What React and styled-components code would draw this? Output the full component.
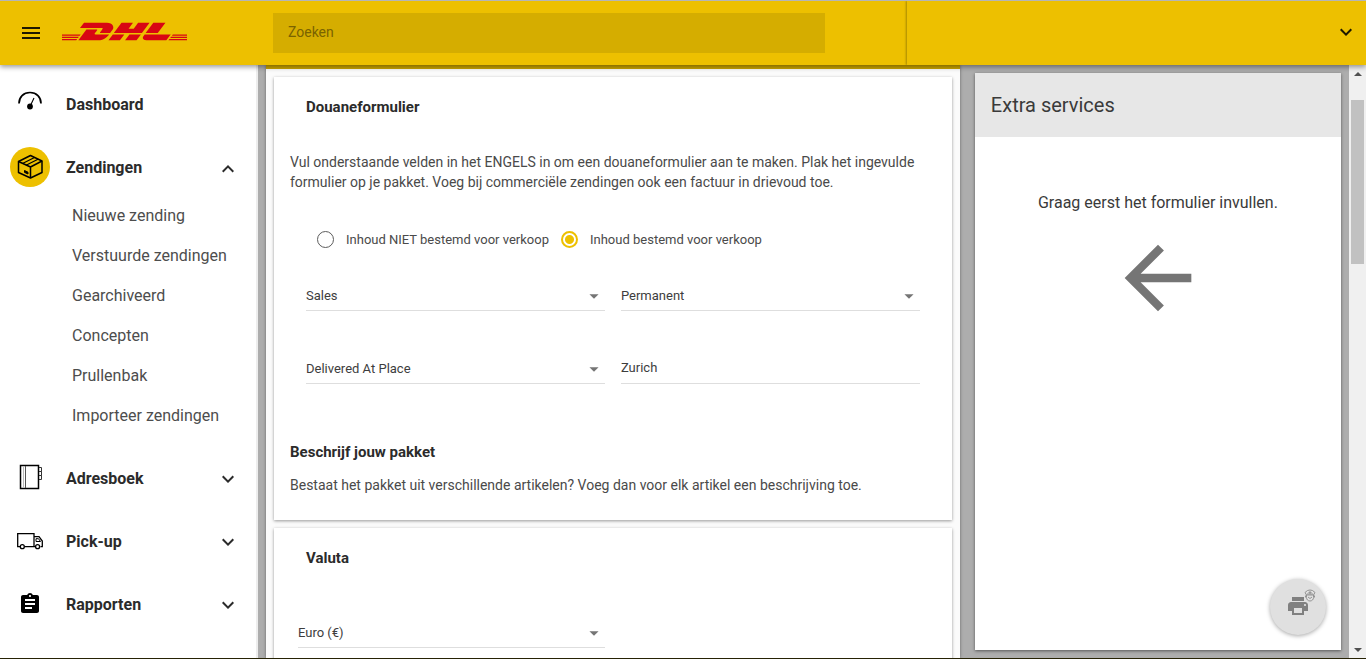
import React from "react";
import styled, { createGlobalStyle, css } from "styled-components";
import {
  MdMenu,
  MdExpandMore,
  MdExpandLess,
  MdAssignment,
  MdArrowBack,
  MdArrowDropDown,
  MdPrint,
} from "react-icons/md";
import { SiDhl } from "react-icons/si";

const yellow = "#edc000";
const ink = "#2b2b2b";

const GlobalStyle = createGlobalStyle`
  *, *::before, *::after { box-sizing: border-box; }
  body {
    margin: 0;
    font-family: Roboto, "Liberation Sans", sans-serif;
    color: ${ink};
    background: #adadad;
  }
  button, input, select { font: inherit; color: inherit; }
  h1, h2, h3, p, ul, fieldset { margin: 0; padding: 0; border: 0; }
  ul { list-style: none; }
  svg { display: block; flex: none; }
`;

const Shell = styled.div`
  height: 100vh;
  display: flex;
  flex-direction: column;
  overflow: hidden;
  border-top: 1px solid #b5b5b5;
  border-bottom: 1px solid #262204;
`;

const Header = styled.header`
  flex: 0 0 64px;
  display: flex;
  align-items: center;
  background: ${yellow};
  box-shadow: 0 2px 5px rgba(0, 0, 0, 0.4);
  z-index: 2;
`;

const Brand = styled.div`
  flex: 0 0 273px;
  display: flex;
  align-items: center;
  gap: 19px;
  padding-left: 19px;
`;

const IconButton = styled.button`
  display: flex;
  padding: 0;
  border: 0;
  background: none;
  color: #1d1800;
`;

const LogoLink = styled.a`
  height: 40px;
  display: flex;
  align-items: center;
  padding-bottom: 4px;
  overflow: hidden;
  color: #d80613;
`;

const Search = styled.input`
  flex: 1;
  min-width: 0;
  height: 40px;
  margin-right: 82px;
  padding: 0 15px 2px;
  border: 0;
  border-radius: 0;
  background: #d5ad00;
  font-size: 14px;
  &::placeholder { color: #7a6300; opacity: 1; }
`;

const Account = styled.div`
  flex: 0 0 33.6%;
  align-self: stretch;
  display: flex;
  align-items: center;
  justify-content: flex-end;
  padding: 0 8px 2px 0;
  box-shadow: -1px 0 2px rgba(0, 0, 0, 0.3);
  clip-path: inset(0 0 0 -3px);
`;

const Body = styled.div`
  flex: 1;
  min-height: 0;
  display: flex;
`;

const Sidebar = styled.nav`
  flex: 0 0 258px;
  padding-top: 15px;
  background: #fff;
  border-right: 2px solid #ededed;
`;

const NavList = styled.ul`
  display: flex;
  flex-direction: column;
  gap: 15px;
`;

const NavLink = styled.a`
  height: 48px;
  display: flex;
  align-items: center;
  gap: 16px;
  padding: 0 16px 0 10px;
  color: ${ink};
  font-size: 16px;
  font-weight: 700;
  text-decoration: none;
`;

const NavLabel = styled.span`
  flex: 1;
`;

const NavIcon = styled.span`
  width: 40px;
  height: 40px;
  display: flex;
  align-items: center;
  justify-content: center;
  border-radius: 50%;
  color: #000;
  background: ${(p) => (p.$active ? yellow : "transparent")};
`;

const Chevron = styled.span`
  padding-top: ${(p) => (p.$open ? "4px" : "2px")};
`;

const SubList = styled.ul`
  padding: 4px 0;
`;

const SubLink = styled.a`
  height: 40px;
  display: flex;
  align-items: center;
  padding-left: 72px;
  color: #4d4d4d;
  font-size: 16px;
  text-decoration: none;
`;

const Content = styled.div`
  flex: 1;
  min-width: 0;
  display: grid;
  grid-template-columns: minmax(0, 1.895fr) minmax(0, 1fr);
  gap: 15px;
  padding: 0 8px;
  background: #adadad;
`;

const Main = styled.main`
  min-height: 0;
  overflow: hidden;
  background: #fbfbfb;
  border-top: 4px solid #cca500;
  padding: 8px;
  display: flex;
  flex-direction: column;
  gap: 8px;
  box-shadow: 0 0 3px rgba(0, 0, 0, 0.4);
`;

const Card = styled.section`
  flex: none;
  padding: 0 16px 25px;
  background: #fff;
  box-shadow: 0 1px 3px rgba(0, 0, 0, 0.4);
`;

const CardTitle = styled.h2`
  padding-left: 16px;
  font-size: 15px;
  font-weight: 700;
  line-height: 60px;
`;

const Text = styled.p`
  font-size: 14px;
  line-height: 20px;
  color: #4a4a4a;
`;

const Intro = styled(Text)`
  padding-top: 15px;
`;

const Choices = styled.fieldset`
  display: flex;
  gap: 12px;
  padding: 27px 0 0 27px;
`;

const Choice = styled.label`
  height: 40px;
  display: flex;
  align-items: center;
  gap: 12px;
  font-size: 13px;
  color: #4a4a4a;
`;

const Radio = styled.input`
  appearance: none;
  width: 17px;
  height: 17px;
  margin: 0;
  border: 1px solid #5c5c5c;
  border-radius: 50%;
  &:checked {
    border: 2px solid ${yellow};
    background: radial-gradient(circle, ${yellow} 4px, transparent 5px);
  }
`;

const Fields = styled.div`
  display: grid;
  grid-template-columns: 1fr 1fr;
  gap: 42px 16px;
  padding: ${(p) => (p.$wide ? "29px 8px 0" : "21px 16px 0")};
`;

const control = css`
  width: 100%;
  height: 31px;
  padding: 0;
  border: 0;
  border-bottom: 1px solid #dedede;
  border-radius: 0;
  background: none;
  font-size: 13px;
  color: #3d3d3d;
  outline: 0;
`;

const SelectBox = styled.div`
  position: relative;
  svg {
    position: absolute;
    right: 0;
    top: 5px;
    color: #757575;
    pointer-events: none;
  }
`;

const SelectControl = styled.select`
  ${control}
  appearance: none;
`;

const TextControl = styled.input`
  ${control}
  padding-bottom: 2px;
`;

const SubTitle = styled.h3`
  padding-top: 58px;
  font-size: 15px;
  font-weight: 700;
  line-height: 20px;
`;

const Note = styled(Text)`
  padding-top: 13px;
`;

const Aside = styled.aside`
  position: relative;
  margin: 8px 0;
  background: #fff;
  box-shadow: 0 1px 3px rgba(0, 0, 0, 0.5);
`;

const AsideTitle = styled.h2`
  padding-left: 16px;
  background: #e7e7e7;
  color: #3a3a3a;
  font-size: 20px;
  font-weight: 400;
  line-height: 64px;
`;

const Hint = styled.div`
  display: flex;
  flex-direction: column;
  align-items: center;
  gap: 15px;
  padding-top: 56px;
  color: #3a3a3a;
  font-size: 16px;
  line-height: 20px;
  svg { color: #757575; }
`;

const PrintButton = styled.button`
  position: absolute;
  right: 15px;
  bottom: 15px;
  width: 56px;
  height: 56px;
  display: flex;
  align-items: center;
  justify-content: center;
  padding: 0 0 2px;
  border: 0;
  border-radius: 50%;
  background: #e0e0e0;
  color: #808080;
  box-shadow: 0 1px 4px rgba(0, 0, 0, 0.35);
`;

const PrintBadge = styled.span`
  position: absolute;
  top: 10px;
  right: 10px;
`;

const ScrollTrack = styled.div`
  flex: 0 0 17px;
  display: flex;
  flex-direction: column;
  align-items: center;
  background: #f0f0f0;
  color: #505050;
`;

const ScrollEnd = styled.span`
  height: 17px;
  display: flex;
  align-items: center;
`;

const ScrollLane = styled.div`
  flex: 1;
  padding-top: 18px;
`;

const ScrollThumb = styled.div`
  width: 13px;
  height: 30.4%;
  background: #c1c1c1;
`;

const GaugeIcon = () => (
  <svg width="28" height="28" viewBox="0 0 28 28" fill="none" stroke="currentColor">
    <path d="M3 13.500C3 7 7.500 2.500 14 2.500S25 7 25 13.500" strokeWidth="1.700" />
    <path d="M14 16.500 18 8" strokeWidth="1.100" />
    <circle cx="14" cy="16.500" r="2.900" fill="currentColor" stroke="none" />
  </svg>
);

const BoxIcon = () => (
  <svg width="28" height="28" viewBox="0 0 28 28" fill="none" stroke="currentColor" strokeWidth="1.500" strokeLinejoin="round">
    <path d="M2.500 8.500 14.500 2.500 26 8V19.500L14.500 25 2.500 19.500Z" />
    <path d="M2.500 8.500 14.500 14 26 8M14.500 14V25" />
    <path d="M6.500 10.500 18.500 4.500M10 12.200 22 6.200" strokeWidth="1.200" />
    <path d="M8.500 17.500 12 19.200V21L8.500 19.400Z" fill="currentColor" strokeWidth="1" />
  </svg>
);

const BookIcon = () => (
  <svg width="28" height="28" viewBox="0 0 28 28" fill="none" stroke="currentColor">
    <path d="M4.500 1.500H22.500V24.500H4.500Z" strokeWidth="1.500" />
    <path d="M9.500 2V24" strokeWidth="1" stroke="#555" />
    <path d="M7.500 2V24" strokeWidth="1" stroke="#bbb" />
    <path d="M23 3.500H25.500V7.500H23M23 7.500H25.500V11.500H23M23 11.500H25.500V15.500H23" strokeWidth="1" stroke="#333" />
  </svg>
);

const TruckIcon = () => (
  <svg width="28" height="28" viewBox="0 0 28 28" fill="none" stroke="currentColor" strokeWidth="1.300">
    <path d="M4 19.700H1.700V6.700H18V19.700H8.500M18 9.700H23L26.300 14V19.700H24.500M18 19.700H19" />
    <path d="M20 11.700H22.500L24.500 14.500H20Z" strokeWidth="1" />
    <circle cx="6.300" cy="19.700" r="2" />
    <circle cx="21.600" cy="19.700" r="2" />
  </svg>
);

const PoliceIcon = () => (
  <svg width="12" height="13" viewBox="0 0 12 13" fill="none" stroke="#8a8a8a" strokeWidth="0.900">
    <path d="M1 3.500 3.500 1.500 6 1 8.500 1.500 11 3.500 9.500 6H2.500Z" />
    <path d="M2.500 6V8.500C2.500 10.500 4 12 6 12S9.500 10.500 9.500 8.500V6M1.500 6.500V8.500M10.500 6.500V8.500M3 5H9M5 3H7V4H5ZM4 8 6 9.500 8 8" />
  </svg>
);

const ScrollArrow = ({ down }) => (
  <svg width="8" height="4" viewBox="0 0 8 4" fill="currentColor">
    <path d={down ? "M0 0H8L4 4Z" : "M0 4H8L4 0Z"} />
  </svg>
);

const shipmentLinks = [
  "Nieuwe zending",
  "Verstuurde zendingen",
  "Gearchiveerd",
  "Concepten",
  "Prullenbak",
  "Importeer zendingen",
];

const menu = [
  { label: "Dashboard", icon: <GaugeIcon /> },
  { label: "Zendingen", icon: <BoxIcon />, active: true, children: shipmentLinks },
  { label: "Adresboek", icon: <BookIcon />, closed: true },
  { label: "Pick-up", icon: <TruckIcon />, closed: true },
  { label: "Rapporten", icon: <MdAssignment size={24} />, closed: true },
];

const Select = ({ label, value }) => (
  <SelectBox>
    <SelectControl aria-label={label} defaultValue={value}>
      <option>{value}</option>
    </SelectControl>
    <MdArrowDropDown size={22} />
  </SelectBox>
);

export default function App() {
  return (
    <Shell>
      <GlobalStyle />
      <Header>
        <Brand>
          <IconButton aria-label="Menu">
            <MdMenu size={24} />
          </IconButton>
          <LogoLink href="#" aria-label="DHL">
            <SiDhl size={125} />
          </LogoLink>
        </Brand>
        <Search type="search" placeholder="Zoeken" aria-label="Zoeken" />
        <Account>
          <IconButton aria-label="Account">
            <MdExpandMore size={24} />
          </IconButton>
        </Account>
      </Header>
      <Body>
        <Sidebar>
          <NavList>
            {menu.map((item) => (
              <li key={item.label}>
                <NavLink href="#">
                  <NavIcon $active={item.active}>{item.icon}</NavIcon>
                  <NavLabel>{item.label}</NavLabel>
                  {item.children && <Chevron $open><MdExpandLess size={24} /></Chevron>}
                  {item.closed && <Chevron><MdExpandMore size={24} /></Chevron>}
                </NavLink>
                {item.children && (
                  <SubList>
                    {item.children.map((name) => (
                      <li key={name}>
                        <SubLink href="#">{name}</SubLink>
                      </li>
                    ))}
                  </SubList>
                )}
              </li>
            ))}
          </NavList>
        </Sidebar>
        <Content>
          <Main>
            <Card>
              <CardTitle>Douaneformulier</CardTitle>
              <Intro>
                Vul onderstaande velden in het ENGELS in om een douaneformulier aan te maken. Plak het ingevulde
                formulier op je pakket. Voeg bij commerciële zendingen ook een factuur in drievoud toe.
              </Intro>
              <Choices>
                <Choice>
                  <Radio type="radio" name="purpose" />
                  Inhoud NIET bestemd voor verkoop
                </Choice>
                <Choice>
                  <Radio type="radio" name="purpose" defaultChecked />
                  Inhoud bestemd voor verkoop
                </Choice>
              </Choices>
              <Fields>
                <Select label="Reden" value="Sales" />
                <Select label="Type export" value="Permanent" />
                <Select label="Leveringsvoorwaarde" value="Delivered At Place" />
                <TextControl type="text" aria-label="Plaats" defaultValue="Zurich" />
              </Fields>
              <SubTitle>Beschrijf jouw pakket</SubTitle>
              <Note>Bestaat het pakket uit verschillende artikelen? Voeg dan voor elk artikel een beschrijving toe.</Note>
            </Card>
            <Card>
              <CardTitle>Valuta</CardTitle>
              <Fields $wide>
                <Select label="Valuta" value="Euro (€)" />
              </Fields>
            </Card>
          </Main>
          <Aside>
            <AsideTitle>Extra services</AsideTitle>
            <Hint>
              <p>Graag eerst het formulier invullen.</p>
              <MdArrowBack size={100} />
            </Hint>
            <PrintButton aria-label="Printen">
              <MdPrint size={24} />
              <PrintBadge><PoliceIcon /></PrintBadge>
            </PrintButton>
          </Aside>
        </Content>
        <ScrollTrack aria-hidden="true">
          <ScrollEnd><ScrollArrow /></ScrollEnd>
          <ScrollLane><ScrollThumb /></ScrollLane>
          <ScrollEnd><ScrollArrow down /></ScrollEnd>
        </ScrollTrack>
      </Body>
    </Shell>
  );
}
